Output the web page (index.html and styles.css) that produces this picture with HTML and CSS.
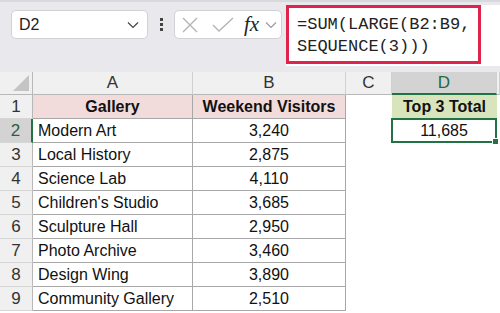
FILE: index.html
```html
<!DOCTYPE html>
<html lang="en">
<head>
    <meta charset="UTF-8">
    <meta name="viewport" content="width=device-width, initial-scale=1.0">
    <title>Top 3 Total</title>
    <link rel="stylesheet" href="styles.css">
</head>
<body>
    <!-- Barra de fórmulas -->
    <div class="toolbar">
        <div class="namebox">
            <span>D2</span>
            <svg width="12" height="8" viewBox="0 0 12 8"><path d="M1 1.5l5 5 5-5" fill="none" stroke="#444" stroke-width="1.2"/></svg>
        </div>
        <div class="dots"><i></i><i></i><i></i></div>
        <div class="fxbox">
            <svg width="18" height="18" viewBox="0 0 18 18"><path d="M2 2l14 14M16 2L2 16" stroke="#b4b4b4" stroke-width="1.4"/></svg>
            <svg width="22" height="18" viewBox="0 0 22 18"><path d="M1 9l6 6L21 2" fill="none" stroke="#b4b4b4" stroke-width="1.4"/></svg>
            <span class="fx">fx</span>
            <svg width="12" height="8" viewBox="0 0 12 8"><path d="M1 1.5l5 5 5-5" fill="none" stroke="#9a9a9a" stroke-width="1.2"/></svg>
        </div>
        <div class="formula">
            <div class="formula-hl">=SUM(LARGE(B2:B9,<br>SEQUENCE(3)))</div>
        </div>
    </div>

    <!-- Planilha -->
    <div class="sheet">
        <div class="corner"><span class="tri"></span></div>
        <div class="colhead">A</div>
        <div class="colhead">B</div>
        <div class="colhead">C</div>
        <div class="colhead sel">D</div>
        <div class="colhead rest"></div>

        <div class="rowhead">1</div>
        <div class="cell t hdr">Gallery</div>
        <div class="cell t hdr">Weekend Visitors</div>
        <div class="cell"></div>
        <div class="cell total">Top 3 Total</div>
        <div class="cell"></div>

        <div class="rowhead sel">2</div>
        <div class="cell t">Modern Art</div>
        <div class="cell t num">3,240</div>
        <div class="cell"></div>
        <div class="cell active num">11,685<span class="handle"></span></div>
        <div class="cell"></div>

        <div class="rowhead">3</div>
        <div class="cell t">Local History</div>
        <div class="cell t num">2,875</div>
        <div class="cell"></div><div class="cell"></div><div class="cell"></div>

        <div class="rowhead">4</div>
        <div class="cell t">Science Lab</div>
        <div class="cell t num">4,110</div>
        <div class="cell"></div><div class="cell"></div><div class="cell"></div>

        <div class="rowhead">5</div>
        <div class="cell t">Children's Studio</div>
        <div class="cell t num">3,685</div>
        <div class="cell"></div><div class="cell"></div><div class="cell"></div>

        <div class="rowhead">6</div>
        <div class="cell t">Sculpture Hall</div>
        <div class="cell t num">2,950</div>
        <div class="cell"></div><div class="cell"></div><div class="cell"></div>

        <div class="rowhead">7</div>
        <div class="cell t">Photo Archive</div>
        <div class="cell t num">3,460</div>
        <div class="cell"></div><div class="cell"></div><div class="cell"></div>

        <div class="rowhead">8</div>
        <div class="cell t">Design Wing</div>
        <div class="cell t num">3,890</div>
        <div class="cell"></div><div class="cell"></div><div class="cell"></div>

        <div class="rowhead">9</div>
        <div class="cell t">Community Gallery</div>
        <div class="cell t num">2,510</div>
        <div class="cell"></div><div class="cell"></div><div class="cell"></div>
    </div>
</body>
</html>
```

FILE: styles.css
```css
body {
    margin: 0;
    width: 500px;
    height: 313px;
    overflow: hidden;
    font-family: "Liberation Sans", Arial, sans-serif;
    background-color: #fff;
}
.toolbar {
    height: 72px;
    box-sizing: border-box;
    background-color: #e9e9ed;
    border-top: 2px solid #d9d9dd;
    display: flex;
    align-items: flex-start;
    padding-top: 3px;
    padding-left: 11px;
}
.namebox {
    margin-top: 5px;
    width: 137px;
    height: 29px;
    box-sizing: border-box;
    background-color: #fff;
    border: 1px solid #d2d2d6;
    border-radius: 5px;
    display: flex;
    align-items: center;
    justify-content: space-between;
    padding: 0 8px 0 7px;
    font-size: 16px;
    color: #222;
}
.dots {
    margin: 13px 0 0 12px;
    width: 3px;
    display: flex;
    flex-direction: column;
    gap: 2px;
}
.dots i {
    display: block;
    width: 3px;
    height: 3px;
    background-color: #444;
}
.fxbox {
    margin: 5px 0 0 11px;
    width: 108px;
    height: 29px;
    box-sizing: border-box;
    background-color: #fff;
    border: 1px solid #d2d2d6;
    border-radius: 5px;
    display: flex;
    align-items: center;
    padding-left: 6px;
    gap: 10px;
}
.fxbox svg:nth-child(2) {
    margin-left: 3px;
}
.fx {
    font-family: "Liberation Serif", serif;
    font-style: italic;
    font-size: 21px;
    color: #222;
    margin-left: 0;
    margin-right: -4px;
}
.formula {
    margin-left: 4px;
    flex: 1;
    height: 61px;
    background-color: #fff;
}
.formula-hl {
    width: 195px;
    height: 59px;
    box-sizing: border-box;
    border: 3px solid #e0234c;
    padding: 6px 0 0 8px;
    font-family: "Liberation Mono", monospace;
    font-size: 17px;
    line-height: 22px;
    color: #222;
}
.sheet {
    display: grid;
    grid-template-columns: 33px 160px 153px 46px 105px 3px;
    grid-template-rows: 23px repeat(9, 24px);
    font-size: 16px;
    color: #111;
}
.corner {
    background-color: #f0f0f0;
    border-right: 1px solid #b8b8b8;
    border-bottom: 1px solid #b8b8b8;
    position: relative;
}
.tri {
    position: absolute;
    right: 3px;
    bottom: 3px;
    width: 0;
    height: 0;
    border-left: 16px solid transparent;
    border-bottom: 16px solid #c4c4c4;
}
.colhead {
    background-color: #f0f0f0;
    border-right: 1px solid #d0d0d0;
    border-bottom: 1px solid #b8b8b8;
    display: flex;
    align-items: center;
    justify-content: center;
    font-size: 17px;
    color: #333;
}
.colhead.sel {
    background-color: #d3d3d3;
    color: #1e6b41;
    border-bottom: 2px solid #217346;
}
.rowhead {
    background-color: #f0f0f0;
    border-right: 1px solid #b8b8b8;
    border-bottom: 1px solid #d6d6d6;
    display: flex;
    align-items: center;
    justify-content: center;
    font-size: 17px;
    color: #333;
}
.rowhead.sel {
    background-color: #d3d3d3;
    color: #2f5d44;
    border-right: 2px solid #217346;
}
.cell {
    display: flex;
    align-items: center;
    padding-left: 5px;
    white-space: nowrap;
}
.cell.t {
    border-right: 1px solid #a8a8a8;
    border-bottom: 1px solid #a8a8a8;
}
.cell.num {
    justify-content: center;
    padding-left: 0;
}
.cell.hdr {
    background-color: #f2dcdb;
    font-weight: bold;
    justify-content: center;
    padding-left: 0;
}
.cell.total {
    background-color: #d8e4bc;
    font-weight: bold;
    justify-content: center;
    padding-left: 0;
}
.cell.active {
    border: 2px solid #217346;
    margin: -1px 0 0 -1px;
    position: relative;
}
.handle {
    position: absolute;
    right: -4px;
    bottom: -4px;
    width: 5px;
    height: 5px;
    background-color: #217346;
    border: 1px solid #fff;
}
```
